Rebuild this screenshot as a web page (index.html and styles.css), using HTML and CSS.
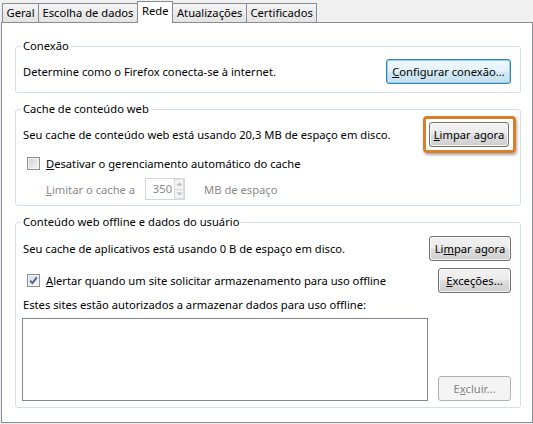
FILE: index.html
```html
<!DOCTYPE html>
<html lang="pt-BR">
<head>
<meta charset="utf-8">
<title>Opções - Rede</title>
<link rel="stylesheet" href="styles.css">
</head>
<body>
<div class="dialog">
  <div class="tabs">
    <div class="tab">Geral</div>
    <div class="tab">Escolha de dados</div>
    <div class="tab active">Rede</div>
    <div class="tab">Atualizações</div>
    <div class="tab">Certificados</div>
  </div>
  <div class="panel">
    <fieldset class="group">
      <legend>Conexão</legend>
      <div class="row r1">
        <span>Determine como o Firefox conecta-se à internet.</span>
        <button class="btn btn-default w-conn"><u>C</u>onfigurar conexão...</button>
      </div>
    </fieldset>

    <fieldset class="group g2">
      <legend>Cache de conteúdo web</legend>
      <div class="row r1">
        <span>Seu cache de conteúdo web está usando 20,3 MB de espaço em disco.</span>
        <button class="btn w-limpar1 highlight"><u>L</u>impar agora</button>
      </div>
      <div class="row r-check">
        <span class="cb"></span>
        <span><u>D</u>esativar o gerenciamento automático do cache</span>
      </div>
      <div class="row r-limit">
        <span class="muted"><u>L</u>imitar o cache a</span>
        <span class="spin">
          <span class="spin-val">350</span>
          <span class="spin-arrows">
            <span class="arr"><svg width="7" height="4" viewBox="0 0 7 4"><path d="M0.5 3.5 L3.5 0.5 L6.5 3.5Z" fill="#b8b8b8"/></svg></span>
            <span class="arr"><svg width="7" height="4" viewBox="0 0 7 4"><path d="M0.5 0.5 L3.5 3.5 L6.5 0.5Z" fill="#b8b8b8"/></svg></span>
          </span>
        </span>
        <span class="muted mb">MB de espaço</span>
      </div>
    </fieldset>

    <fieldset class="group g3">
      <legend>Conteúdo web offline e dados do usuário</legend>
      <div class="row r-app">
        <span>Seu cache de aplicativos está usando 0 B de espaço em disco.</span>
        <button class="btn w-limpar2">Li<u>m</u>par agora</button>
      </div>
      <div class="row r-alert">
        <span class="cb checked"><svg width="9" height="9" viewBox="0 0 9 9"><path d="M1.2 4.6 L3.4 7 L7.8 1.4" fill="none" stroke="#4a5f8f" stroke-width="1.8"/></svg></span>
        <span class="grow"><u>A</u>lertar quando um site solicitar armazenamento para uso offline</span>
        <button class="btn w-exc"><u>E</u>xceções...</button>
      </div>
      <div class="row r-text">
        <span>Estes sites estão autorizados a armazenar dados para uso offline:</span>
      </div>
      <div class="row r-list">
        <div class="listbox"></div>
        <button class="btn disabled w-exc">E<u>x</u>cluir...</button>
      </div>
    </fieldset>
  </div>
</div>
</body>
</html>
```

FILE: styles.css
```css
html, body {
  margin: 0;
  padding: 0;
}
body {
  background: #f0f0f0;
  font-family: "Noto Sans", "Open Sans", sans-serif;
  font-size: 11.2px;
  color: #000;
}
.dialog {
  width: 533px;
  height: 424px;
  overflow: hidden;
}
.tabs {
  display: flex;
  align-items: flex-end;
  height: 22px;
  padding-left: 2px;
}
.tab {
  box-sizing: border-box;
  height: 19px;
  line-height: 17px;
  padding: 0 3.5px;
  border: 1px solid #898c95;
  border-bottom: none;
  margin-right: -1px;
  background: linear-gradient(#f4f4f4, #e3e3e3);
  white-space: nowrap;
}
.tab.active {
  position: relative;
  z-index: 2;
  height: 22px;
  margin-bottom: -1px;
  line-height: 18px;
  padding: 0 4px 3px;
  background: #fff;
}
.panel {
  position: relative;
  z-index: 1;
  box-sizing: border-box;
  width: 532px;
  height: 401px;
  margin-left: 1px;
  border: 1px solid #898c95;
  background: #fff;
  padding: 15px 11px 0 13px;
}
.group {
  margin: 0;
  padding: 0 9px 8px 7px;
  border: 1px solid #d5dfe5;
  border-radius: 3px;
  min-width: 0;
}
.group legend {
  padding: 0 2px;
  margin-left: -2px;
  line-height: 16px;
  color: #000;
}
.g2, .g3 {
  margin-top: 8px;
}
.g2 {
  padding-bottom: 5px;
}
.g3 {
  padding-bottom: 6px;
}
.row {
  display: flex;
  align-items: center;
  justify-content: space-between;
  white-space: nowrap;
}
.r1 {
  margin-top: 5px;
  height: 25px;
}
.r-check {
  margin-top: 8px;
  height: 16px;
  justify-content: flex-start;
  padding-left: 4px;
  gap: 6px;
}
.r-limit {
  margin-top: 7px;
  height: 22px;
  justify-content: flex-start;
  padding-left: 23px;
}
.r-app {
  margin-top: 6px;
  height: 25px;
}
.r-alert {
  margin-top: 7px;
  height: 25px;
  padding-left: 4px;
  gap: 6px;
}
.r-text {
  margin-top: 3px;
  height: 16px;
}
.r-list {
  margin-top: 6px;
  height: 83px;
  align-items: flex-end;
}
.grow {
  flex: 1;
}
.muted {
  color: #8a8a8a;
}
.mb {
  margin-left: 19px;
}
.btn {
  box-sizing: border-box;
  height: 25px;
  padding: 0;
  border: 1px solid #707070;
  border-radius: 3px;
  background: linear-gradient(#f2f2f2 0%, #ebebeb 48%, #dddddd 52%, #cfcfcf 100%);
  box-shadow: inset 0 0 0 1px rgba(255, 255, 255, 0.75);
  font-family: inherit;
  font-size: inherit;
  color: #000;
  text-align: center;
  white-space: nowrap;
}
.btn-default {
  border-color: #3c7fb1;
  box-shadow: inset 0 0 0 1px #8fd3f3;
  background: linear-gradient(#f0f8fd 0%, #e5f3fb 48%, #d3e9f5 52%, #c6e0ef 100%);
}
.btn.disabled {
  border-color: #adb2b5;
  background: #f4f4f4;
  color: #838383;
  box-shadow: none;
}
.w-conn {
  width: 125px;
}
.w-limpar1 {
  width: 80px;
  margin-right: 2px;
}
.w-limpar2 {
  width: 82px;
}
.w-exc {
  width: 73px;
}
.highlight {
  position: relative;
}
.highlight::after {
  content: "";
  position: absolute;
  top: -7px;
  left: -7px;
  right: -8px;
  bottom: -7px;
  border: 3px solid #dc7d2a;
  border-radius: 4px;
  box-shadow: 1px 2px 3px rgba(0, 0, 0, 0.35);
  pointer-events: none;
}
.cb {
  box-sizing: border-box;
  display: inline-flex;
  align-items: center;
  justify-content: center;
  flex: none;
  width: 13px;
  height: 13px;
  border: 1px solid #8e8f8f;
  box-shadow: inset 0 0 0 1px #f4f4f4;
  background: linear-gradient(135deg, #cdd0d4, #f7f7f7);
}
.cb.checked {
  background: linear-gradient(135deg, #d6dbe2, #f7f7f7);
}
.spin {
  box-sizing: border-box;
  display: flex;
  width: 40px;
  height: 22px;
  margin-left: 10px;
  border: 1px solid #d4d6d9;
  background: #fff;
}
.spin-val {
  flex: 1;
  text-align: right;
  line-height: 20px;
  padding-right: 2px;
  color: #8a8a8a;
}
.spin-arrows {
  display: flex;
  flex-direction: column;
  width: 10px;
}
.arr {
  flex: 1;
  display: flex;
  align-items: center;
  justify-content: center;
  border: 1px solid #dcdcdc;
  background: #f4f4f4;
}
.arr + .arr {
  border-top: none;
}
.listbox {
  box-sizing: border-box;
  width: 406px;
  height: 83px;
  margin-left: -1px;
  border: 1px solid #828790;
  background: #fff;
}
```
